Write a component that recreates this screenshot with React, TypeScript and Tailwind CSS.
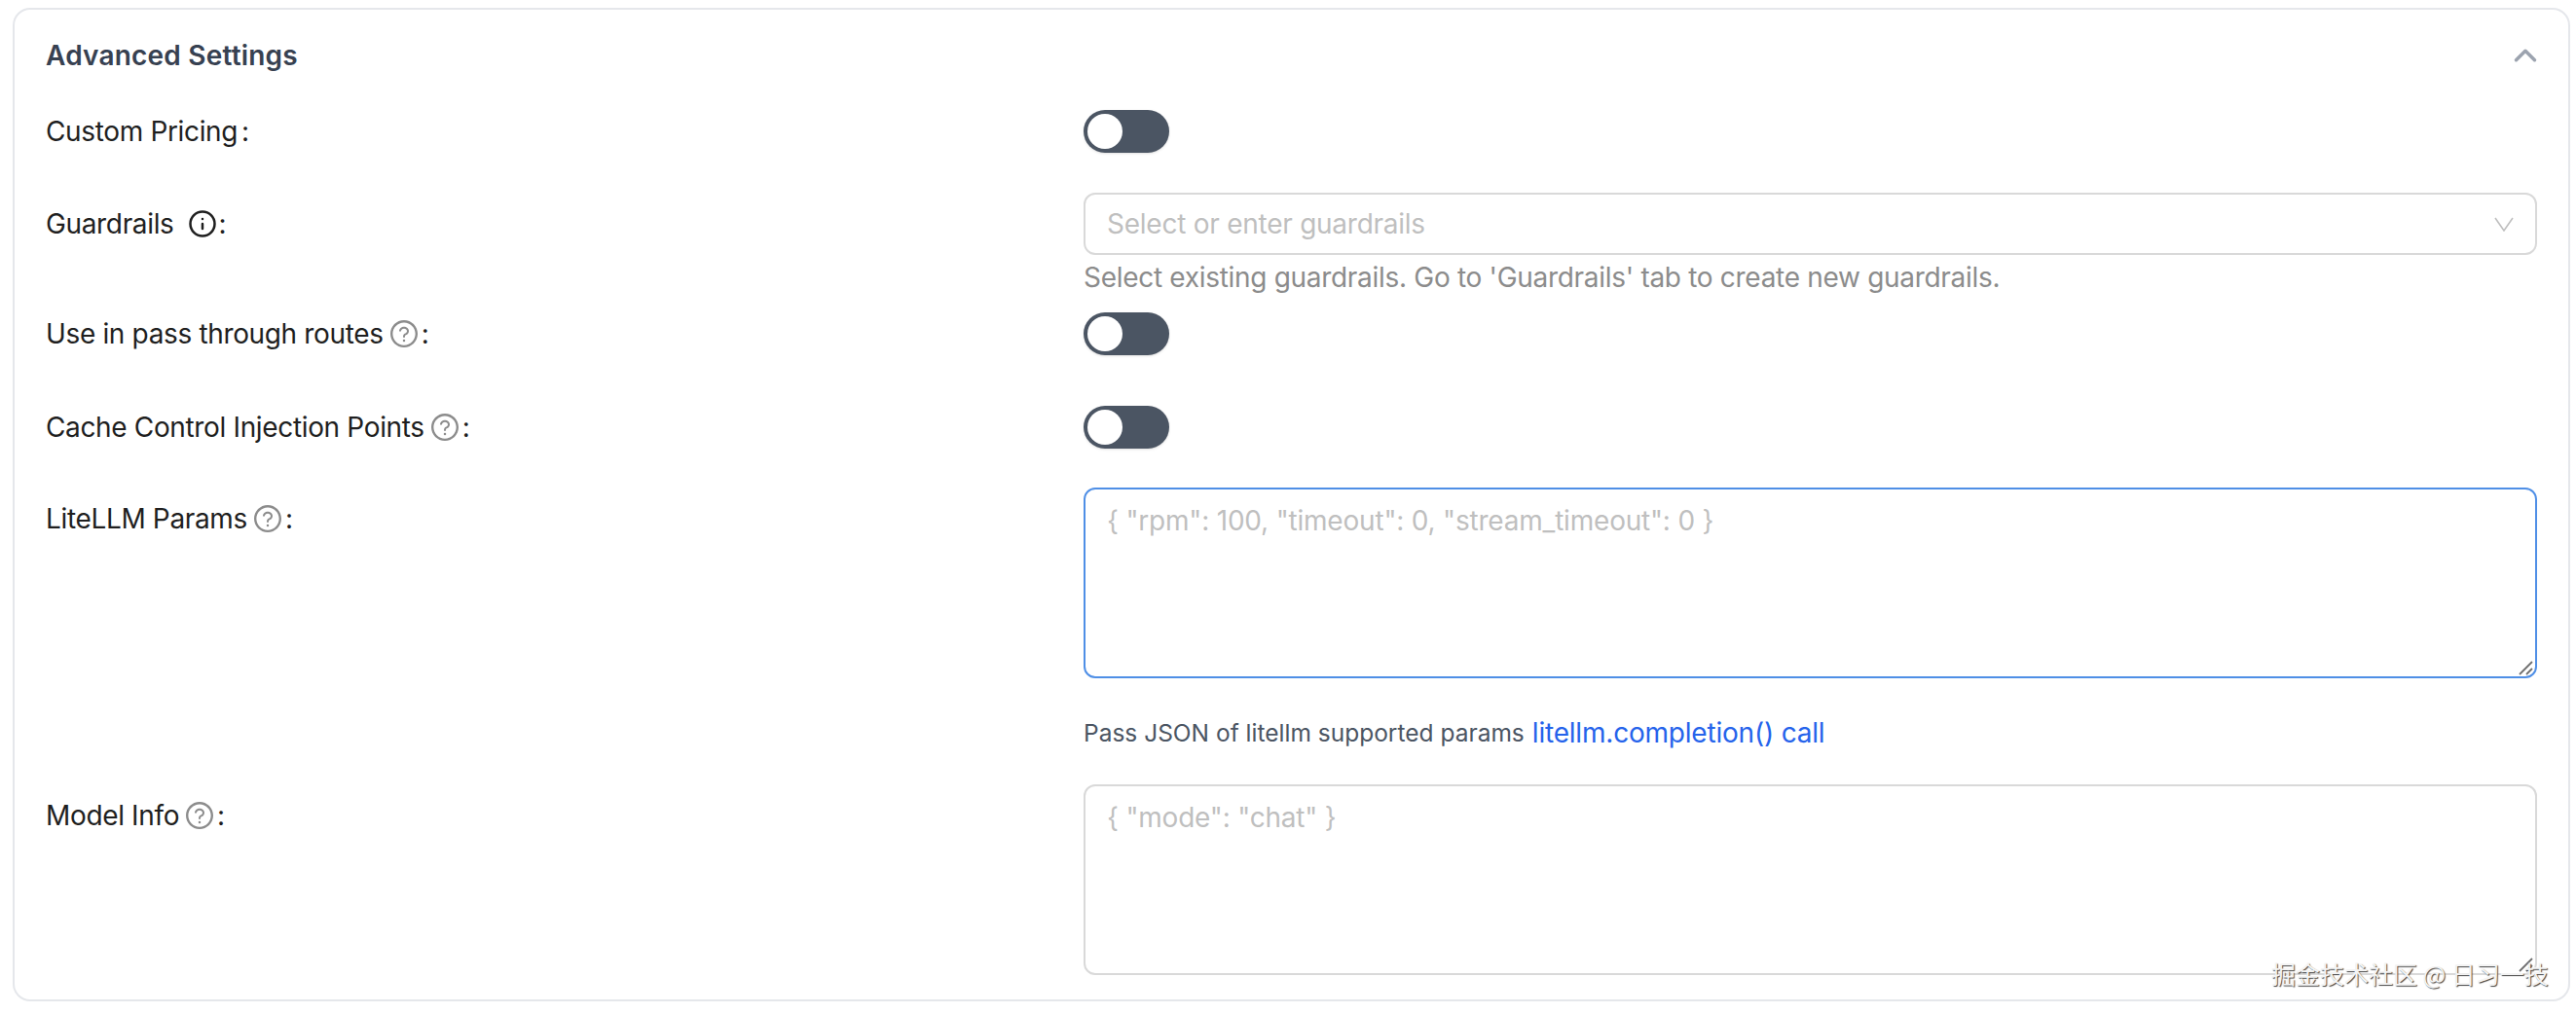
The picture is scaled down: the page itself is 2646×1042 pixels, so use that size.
import type { ReactNode } from "react";
import { AiOutlineQuestionCircle } from "react-icons/ai";
import { ChevronUp, Info } from "lucide-react";

function Label({ text, hint, info }: { text: string; hint?: boolean; info?: boolean }) {
  return (
    <div className="flex h-16 items-center text-[28px] tracking-[-0.35px] text-[#1f1f1f]">
      <span>{text}</span>
      {hint && <AiOutlineQuestionCircle className="ml-[5px] mr-[2px] text-[32px] text-[#8c8c8c]" />}
      {info && <Info className="ml-[14px] mr-[2px] h-[30px] w-[30px] text-[#1f1f1f]" strokeWidth={2} />}
      <span className={hint || info ? "" : "ml-[4px]"}>:</span>
    </div>
  );
}

function Row({ label, className, children }: { label: ReactNode; className: string; children: ReactNode }) {
  return (
    <div className={`grid grid-cols-[1066px_1fr] ${className}`}>
      {label}
      <div>{children}</div>
    </div>
  );
}

function Toggle() {
  return (
    <div className="flex h-16 items-center">
      <div className="flex h-11 w-[88px] items-center rounded-full bg-[#4b5563] pl-1 shadow-sm">
        <div className="h-9 w-9 rounded-full bg-white" />
      </div>
    </div>
  );
}

function JsonBox({ placeholder, active }: { placeholder: string; active?: boolean }) {
  return (
    <div className="relative h-[196px]">
      <textarea
        placeholder={placeholder}
        className={`h-full w-full resize-none rounded-[12px] border-2 bg-white px-[22px] py-[12px] text-[28px] leading-[40px] tracking-[-0.2px] outline-none placeholder:text-[#bfbfbf] ${
          active ? "border-[#4f8fe6]" : "border-[#d9d9d9]"
        }`}
      />
      <svg className="absolute bottom-[3px] right-[3px] h-[16px] w-[16px] text-[#707070]" viewBox="0 0 16 16" fill="none" stroke="currentColor" strokeWidth="1.8">
        <path d="M1 15 14 2M8 15l6-6" />
      </svg>
    </div>
  );
}

export default function App() {
  return (
    <div className="min-h-[1042px] bg-white pl-[13px] pr-[6px] pt-2 font-['Inter',sans-serif]">
      <div className="rounded-[18px] border-2 border-[#e5e7eb] bg-white px-[32px] pb-[25px]">
        <div className="flex h-[93px] items-center justify-between">
          <span className="text-[28px] font-semibold tracking-[0.2px] text-[#374151]">Advanced Settings</span>
          <ChevronUp className="-mr-[7px] h-[38px] w-[38px] text-[#9ca3af]" strokeWidth={2.2} />
        </div>

        <Row label={<Label text="Custom Pricing" />} className="mb-[31px]">
          <Toggle />
        </Row>

        <Row label={<Label text="Guardrails" info />} className="mb-[3px]">
          <div className="flex h-16 items-center justify-between rounded-[12px] border-2 border-[#d9d9d9] pl-[22px] pr-[22px]">
            <span className="text-[28px] tracking-[-0.25px] text-[#bfbfbf]">Select or enter guardrails</span>
            <svg className="h-[15px] w-[20px] text-[#bfbfbf]" viewBox="0 0 20 15" fill="none" stroke="currentColor" strokeWidth="1.6">
              <path d="M1 1l9 13 9-13" />
            </svg>
          </div>
          <div className="h-[46px] text-[28px] leading-[46px] tracking-[-0.3px] text-[#8c8c8c]">
            Select existing guardrails. Go to 'Guardrails' tab to create new guardrails.
          </div>
        </Row>

        <Row label={<Label text="Use in pass through routes" hint />} className="mb-[32px]">
          <Toggle />
        </Row>

        <Row label={<Label text="Cache Control Injection Points" hint />} className="mb-[30px]">
          <Toggle />
        </Row>

        <Row label={<Label text="LiteLLM Params" hint />} className="mb-[33px]">
          <JsonBox placeholder={'{ "rpm": 100, "timeout": 0, "stream_timeout": 0 }'} active />
          <div className="mt-[36px] flex h-[40px] items-center gap-[8px]">
            <span className="text-[24.5px] text-[#4b5563]">Pass JSON of litellm supported params</span>
            <a className="text-[28px] tracking-[-0.2px] text-[#2563eb]">litellm.completion() call</a>
          </div>
        </Row>

        <Row label={<Label text="Model Info" hint />} className="">
          <JsonBox placeholder={'{ "mode": "chat" }'} />
        </Row>
      </div>

      <div className="absolute left-[2333px] top-[982px] font-['Noto_Sans_CJK_SC',sans-serif] text-[25px] leading-[36px] text-[#f4f4f4] [text-shadow:1px_1px_1px_#444]">
        掘金技术社区 @ 日习一技
      </div>
    </div>
  );
}
